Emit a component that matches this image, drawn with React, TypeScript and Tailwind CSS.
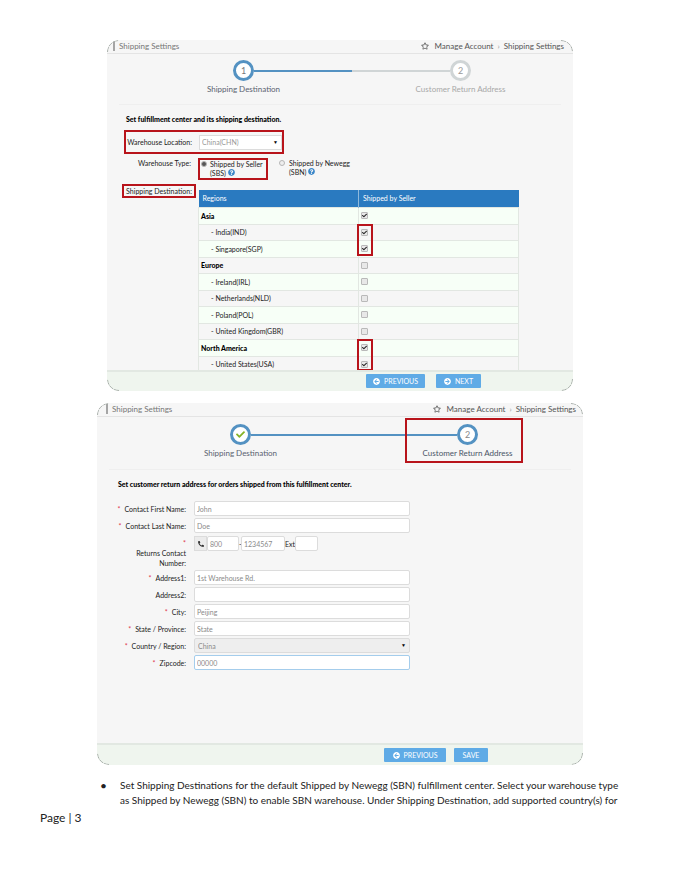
import React from "react";
import { FaArrowCircleLeft, FaArrowCircleRight, FaCheck, FaPhoneAlt, FaQuestionCircle, FaRegStar } from "react-icons/fa";

const regions = [
  { name: "Asia", group: true, checked: true },
  { name: "India(IND)", checked: true, mark: true },
  { name: "Singapore(SGP)", checked: true },
  { name: "Europe", group: true },
  { name: "Ireland(IRL)" },
  { name: "Netherlands(NLD)" },
  { name: "Poland(POL)" },
  { name: "United Kingdom(GBR)" },
  { name: "North America", group: true, checked: true, mark: true },
  { name: "United States(USA)", checked: true },
];

const inputClass =
  "h-[15px] w-full rounded-[2px] border bg-white px-[2px] text-[7px] text-[#8a8a8a] outline-none";

function Corners() {
  const arc = "pointer-events-none absolute size-3";
  const path = <path d="M0.5 12A11.5 11.5 0 0 1 12 0.5" fill="none" stroke="#a9b0ab" strokeDasharray="5 1" />;
  return (
    <>
      <svg className={`${arc} left-0 top-0`} viewBox="0 0 12 12">{path}</svg>
      <svg className={`${arc} right-0 top-0 rotate-90`} viewBox="0 0 12 12">{path}</svg>
      <svg className={`${arc} bottom-0 right-0 rotate-180`} viewBox="0 0 12 12">{path}</svg>
      <svg className={`${arc} bottom-0 left-0 -rotate-90`} viewBox="0 0 12 12">{path}</svg>
    </>
  );
}

function Header({ className }: { className: string }) {
  return (
    <header
      className={`flex h-[14px] items-center justify-between border-b border-[#e4e4e4] pb-px text-[8px] leading-[12px] text-[#777] ${className}`}
    >
      <h2 className="border-l-2 border-[#a5a5a5] pl-1 leading-[10px]">Shipping Settings</h2>
      <nav className="flex items-center text-[#555]">
        <FaRegStar className="mr-[6px] size-[8px]" />
        <a href="#account">Manage Account</a>
        <span className="px-1 text-[#999]">›</span>
        <a href="#shipping">Shipping Settings</a>
      </nav>
    </header>
  );
}

function Steps({ second }: { second?: boolean }) {
  const circle = "flex size-[21px] items-center justify-center rounded-full border-[3px] bg-white text-[9px]";
  return (
    <div className={second ? "pl-[30px] pr-[2px]" : "pl-7 pr-1"}>
      <ol className="grid grid-cols-2 text-center text-[8px] leading-[12px]">
        <li className="text-[#5a6270]">
          <div className="flex items-center">
            <span className="flex-1" />
            <span className={`${circle} border-[#5492c2] text-[#777]`}>
              {second ? <FaCheck className="size-[9px] text-[#86b326]" /> : "1"}
            </span>
            <span className="h-[2px] flex-1 bg-[#5492c2]" />
          </div>
          <p className="mt-[2px]">Shipping Destination</p>
        </li>
        <li className={second ? "relative text-[#4a5566]" : "text-[#a8a8a8]"}>
          <div className="flex items-center">
            <span className={`h-[2px] flex-1 ${second ? "bg-[#5492c2]" : "bg-[#d0d5d6]"}`} />
            <span className={`${circle} ${second ? "border-[#5492c2] text-[#888]" : "border-[#d0d5d6] text-[#999]"}`}>
              2
            </span>
            <span className="flex-1" />
          </div>
          <p className="mt-[2px]">Customer Return Address</p>
          {second && (
            <span className="absolute -bottom-1 -top-[6px] left-[51px] right-[58px] border-2 border-[#b8141b]" />
          )}
        </li>
      </ol>
    </div>
  );
}

function Button({ children, className }: { children: React.ReactNode; className: string }) {
  return (
    <button
      type="button"
      className={`flex h-[14px] items-center justify-center gap-1 rounded-[1px] bg-[#5fabe6] text-[7px] text-white ${className}`}
    >
      {children}
    </button>
  );
}

function Field({ id, label, value, optional, focused }: {
  id: string;
  label: string;
  value: string;
  optional?: boolean;
  focused?: boolean;
}) {
  return (
    <div className="flex items-center gap-2">
      <label htmlFor={id} className="w-[89px] shrink-0 text-right">
        {!optional && <span className="mr-1 text-[#e0364c]">*</span>}
        {label}
      </label>
      <input
        id={id}
        defaultValue={value}
        className={`${inputClass} ${focused ? "border-[#a4cdec]" : "border-[#dcdcdc]"}`}
      />
    </div>
  );
}

function DestinationPanel() {
  return (
    <section className="relative mx-auto flex h-[351px] max-w-[466px] flex-col overflow-hidden rounded-xl bg-[#f6f6f6]">
      <Header className="pl-[6px] pr-[9px]" />
      <div className="pt-[6px]">
        <Steps />
      </div>
      <div className="mx-3 mt-[9px] border-t border-[#efefef]" />
      <h3 className="ml-[19px] mt-2 text-[7px] font-black leading-[12px] text-black">
        Set fulfillment center and its shipping destination.
      </h3>

      <div className="ml-[17px] mt-[5px] flex h-6 w-[160px] items-center gap-[7px] whitespace-nowrap border-2 border-[#b8141b]">
        <label htmlFor="location" className="w-[66px] shrink-0 text-right">
          Warehouse Location:
        </label>
        <div className="relative flex-1">
          <select
            id="location"
            className="block h-[15px] w-full appearance-none border border-[#dcdcdc] bg-white pl-[2px] text-[7px] text-[#999]"
          >
            <option>China(CHN)</option>
          </select>
          <span className="pointer-events-none absolute right-1 top-[3px] text-[5px] leading-[8px] text-black">▼</span>
        </div>
      </div>

      <div className="mt-1 flex gap-[7px] whitespace-nowrap">
        <span className="w-[84px] shrink-0 text-right">Warehouse Type:</span>
        <label className="flex h-[22px] w-[70px] items-start gap-[3px] border-2 border-[#b8141b] pl-px leading-[9px]">
          <input
            type="radio"
            name="type"
            defaultChecked
            className="mt-px size-[6px] shrink-0 appearance-none rounded-full border border-[#b5b5b5] bg-[#eee] checked:bg-[#555]"
          />
          <span>
            Shipped by Seller
            <br />
            (SBS) <FaQuestionCircle className="inline size-[7px] align-baseline text-[#3d88c9]" />
          </span>
        </label>
        <label className="ml-1 flex items-start gap-1 pt-px leading-[9px]">
          <input
            type="radio"
            name="type"
            className="mt-px size-[6px] shrink-0 appearance-none rounded-full border border-[#b5b5b5] bg-[#eee] checked:bg-[#555]"
          />
          <span>
            Shipped by Newegg
            <br />
            (SBN) <FaQuestionCircle className="inline size-[7px] align-baseline text-[#3d88c9]" />
          </span>
        </label>
      </div>

      <div className="mt-1 flex min-h-0 flex-1 gap-[2px] pl-[15px] pr-[54px]">
        <span className="flex h-[14px] w-[74px] shrink-0 items-center justify-center whitespace-nowrap border-2 border-[#b8141b]">
          Shipping Destination:
        </span>
        <div className="min-h-0 flex-1 overflow-hidden pt-[6px]">
          <table className="w-full table-fixed border-collapse text-left">
            <thead>
              <tr className="h-[17px] bg-[#2a7ac0] text-white">
                <th className="w-1/2 border-r border-[#8fb9dc] pl-1 font-normal">Regions</th>
                <th className="pl-1 font-normal">Shipped by Seller</th>
              </tr>
            </thead>
            <tbody>
              {regions.map((r) => (
                <tr key={r.name} className="h-[16px] odd:h-[17px] odd:bg-[#f7fff7]">
                  <td className={`border border-[#e2e7e2] p-0 ${r.group ? "pl-[2px] font-black text-black" : "pl-3"}`}>
                    {r.group ? r.name : `-  ${r.name}`}
                  </td>
                  <td className="relative border border-[#e2e7e2] p-0 pl-[2px]">
                    <span className="relative flex size-[7px]">
                      <input
                        type="checkbox"
                        aria-label={r.name}
                        defaultChecked={r.checked}
                        className="peer size-[7px] appearance-none rounded-[1px] border border-[#b9b9b9] bg-[#e8e8e8]"
                      />
                      <FaCheck className="pointer-events-none absolute left-px top-px hidden size-[5px] text-[#222] peer-checked:block" />
                    </span>
                    {r.mark && (
                      <span className="absolute -left-[2px] -top-px z-10 h-8 w-4 border-2 border-[#b8141b]" />
                    )}
                  </td>
                </tr>
              ))}
            </tbody>
          </table>
        </div>
      </div>

      <footer className="flex h-[21px] shrink-0 items-start justify-end gap-[11px] border-t-2 border-[#e2e8e2] bg-[#eff5ee] pr-[92px] pt-[2px]">
        <Button className="w-[59px]">
          <FaArrowCircleLeft className="size-[7px]" /> PREVIOUS
        </Button>
        <Button className="w-[45px]">
          <FaArrowCircleRight className="size-[7px]" /> NEXT
        </Button>
      </footer>
      <Corners />
    </section>
  );
}

function AddressPanel() {
  return (
    <section className="relative mx-auto mt-3 flex h-[362px] max-w-[486px] flex-col overflow-hidden rounded-xl bg-[#f6f6f6]">
      <Header className="pl-[9px] pr-[7px]" />
      <div className="pt-[7px]">
        <Steps second />
      </div>
      <div className="mx-3 mt-[10px] border-t border-[#efefef]" />
      <h3 className="ml-[21px] mt-2 text-[7px] font-black leading-[12px] text-black">
        Set customer return address for orders shipped from this fulfillment center.
      </h3>

      <form className="mr-[173px] mt-[11px] flex flex-col gap-[2px]">
        <Field id="first" label="Contact First Name:" value="John" />
        <Field id="last" label="Contact Last Name:" value="Doe" />
        <div className="flex gap-2 pt-px">
          <label htmlFor="phone" className="w-[89px] shrink-0 pt-[2px] text-right">
            <span className="text-[#e0364c]">*</span>
            <br />
            Returns Contact
            <br />
            Number:
          </label>
          <div className="flex h-[15px] items-center">
            <span className="flex h-[15px] w-[13px] items-center justify-center border border-[#dcdcdc] bg-[#ececec]">
              <FaPhoneAlt className="size-[6px] text-[#333]" />
            </span>
            <input
              aria-label="Area code"
              defaultValue="800"
              className={`${inputClass} max-w-[32px] border-[#dcdcdc]`}
            />
            <span className="w-[2px]">-</span>
            <input id="phone" defaultValue="1234567" className={`${inputClass} max-w-[44px] border-[#dcdcdc]`} />
            <label htmlFor="ext">Ext</label>
            <input id="ext" className={`${inputClass} max-w-[23px] border-[#dcdcdc]`} />
          </div>
        </div>
        <Field id="address1" label="Address1:" value="1st Warehouse Rd." />
        <Field id="address2" label="Address2:" value="" optional />
        <Field id="city" label="City:" value="Peijing" />
        <Field id="state" label="State / Province:" value="State" />
        <div className="flex items-center gap-2">
          <label htmlFor="country" className="w-[89px] shrink-0 text-right">
            <span className="mr-1 text-[#e0364c]">*</span>
            Country / Region:
          </label>
          <div className="relative flex-1">
            <select
              id="country"
              className="block h-[15px] w-full appearance-none rounded-[2px] border border-[#dcdcdc] bg-[#eee] pl-[3px] text-[7px] text-[#8a8a8a]"
            >
              <option>China</option>
            </select>
            <span className="pointer-events-none absolute right-1 top-[3px] text-[5px] leading-[8px] text-black">▼</span>
          </div>
        </div>
        <Field id="zip" label="Zipcode:" value="00000" focused />
      </form>

      <footer className="mt-auto flex h-[22px] shrink-0 items-center justify-end gap-2 border-t-2 border-[#e2e8e2] bg-[#eff5ee] pr-[95px]">
        <Button className="w-[62px]">
          <FaArrowCircleLeft className="size-[7px]" /> PREVIOUS
        </Button>
        <Button className="w-[34px]">SAVE</Button>
      </footer>
      <Corners />
    </section>
  );
}

export default function App() {
  return (
    <main className="min-h-screen bg-white pt-10 font-[Lato,'Open_Sans',sans-serif] text-[7px] leading-[10px] text-[#222]">
      <DestinationPanel />
      <AddressPanel />

      <ul className="ml-[100px] mr-10 mt-[13px] text-[10px] leading-[15px] text-[#222]">
        <li className="flex">
          <span className="w-5 shrink-0 text-[12px]">•</span>
          <p>
            Set Shipping Destinations for the default Shipped by Newegg (SBN) fulfillment center. Select your warehouse type
            <br />
            as Shipped by Newegg (SBN) to enable SBN warehouse. Under Shipping Destination, add supported country(s) for
          </p>
        </li>
      </ul>
      <p className="ml-10 mt-[2px] text-[12px] leading-[15px] text-[#222]">Page | 3</p>
    </main>
  );
}
